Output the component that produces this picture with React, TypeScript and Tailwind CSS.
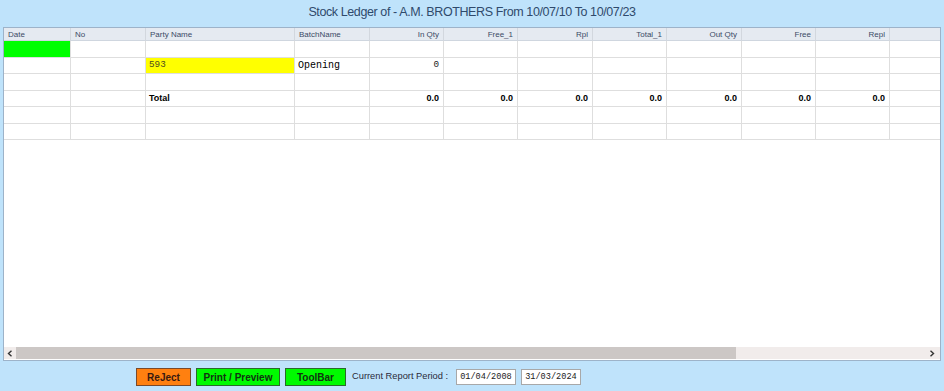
import React from 'react';

const cols = ['Date', 'No', 'Party Name', 'BatchName', 'In Qty', 'Free_1', 'Rpl', 'Total_1', 'Out Qty', 'Free', 'Repl', ''];
const rightCols = [4, 5, 6, 7, 8, 9, 10];

type Cell = { text?: string; kind?: 'mono' | 'mono9' | 'num' | 'bold'; bg?: string };

const rows: Cell[][] = [
	[{ bg: 'bg-[#00ff00]' }],
	[{}, {}, { text: '593', kind: 'mono9', bg: 'bg-[#ffff00]' }, { text: 'Opening', kind: 'mono' }, { text: '0', kind: 'num' }],
	[],
	[
		{},
		{},
		{ text: 'Total', kind: 'bold' },
		{},
		{ text: '0.0', kind: 'bold' },
		{ text: '0.0', kind: 'bold' },
		{ text: '0.0', kind: 'bold' },
		{ text: '0.0', kind: 'bold' },
		{ text: '0.0', kind: 'bold' },
		{ text: '0.0', kind: 'bold' },
		{ text: '0.0', kind: 'bold' },
	],
	[],
	[],
];

const gridCols =
	'grid grid-cols-[67px_75px_149px_75px_74px_74px_75px_74px_75px_74px_74px_1fr]';

function App() {
	return (
		<div
			className="w-[944px] h-[391px] bg-[#bfe3fb] flex flex-col overflow-hidden"
			style={{ fontFamily: '"Liberation Sans", Arial, sans-serif' }}
		>
			<div className="h-[27px] flex items-center justify-center text-[12.5px] tracking-[-0.4px] text-[#2f4a6c] pb-[3px]">
				Stock Ledger of - A.M. BROTHERS From 10/07/10 To 10/07/23
			</div>

			<div className="mx-[3px] h-[334px] bg-white border border-[#9db3c9] flex flex-col">
				<div className={`${gridCols} h-[13px] bg-[#e5eaf1] border-b border-[#cfd6df]`}>
					{cols.map((c, i) => (
						<div
							key={i}
							className={`border-r border-[#d2d7de] last:border-r-0 px-[4px] pt-[1px] text-[8px] leading-[12px] text-[#3b4a66] ${
								rightCols.includes(i) ? 'text-right' : 'text-left'
							}`}
						>
							{c}
						</div>
					))}
				</div>

				{rows.map((r, ri) => (
					<div key={ri} className={`${gridCols} h-[16.5px]`}>
						{cols.map((_, ci) => {
							const cell = r[ci] || {};
							let font = '';
							if (cell.kind === 'mono')
								font = 'font-["Liberation_Mono"] text-[10px] text-black';
							if (cell.kind === 'mono9')
								font = 'font-["Liberation_Mono"] text-[9.3px] text-[#4d4d20]';
							if (cell.kind === 'num')
								font = 'font-["Liberation_Mono"] text-[9.3px] text-[#222]';
							if (cell.kind === 'bold') font = 'font-bold text-[9px] text-black';
							return (
								<div
									key={ci}
									className={`border-r border-b border-[#dedede] last:border-r-0 px-[3px] flex items-center ${
										rightCols.includes(ci) ? 'justify-end pr-[4px]' : 'justify-start'
									} ${cell.bg || ''} ${font}`}
								>
									{cell.text}
								</div>
							);
						})}
					</div>
				))}

				<div className="flex-1" />

				<div className="h-[12px] flex items-center bg-[#f1eceb] mb-[1px]">
					<div className="w-[12px] h-full flex items-center justify-center">
						<svg width="6" height="7" viewBox="0 0 6 7">
							<path d="M4.5 0.8 L1.5 3.5 L4.5 6.2" fill="none" stroke="#333" strokeWidth="1.4" />
						</svg>
					</div>
					<div className="w-[720px] h-full bg-[#ccc7c5]" />
					<div className="flex-1" />
					<div className="w-[12px] h-full flex items-center justify-center mr-[2px]">
						<svg width="6" height="7" viewBox="0 0 6 7">
							<path d="M1.5 0.8 L4.5 3.5 L1.5 6.2" fill="none" stroke="#333" strokeWidth="1.4" />
						</svg>
					</div>
				</div>
			</div>

			<div className="flex items-center pl-[136px] pt-[7px] gap-[5px]">
				<button className="w-[55px] h-[18px] bg-[#ff8010] border border-[#7a4a2a] text-[10px] font-bold text-[#3a1a10] flex items-center justify-center">
					ReJect
				</button>
				<button className="w-[84px] h-[18px] bg-[#00fa00] border border-[#2a6a2a] text-[10px] font-bold text-[#113311] flex items-center justify-center">
					Print / Preview
				</button>
				<button className="w-[61px] h-[18px] bg-[#00fa00] border border-[#2a6a2a] text-[10px] font-bold text-[#113311] flex items-center justify-center">
					ToolBar
				</button>
				<span className="ml-[1px] text-[9.3px] text-[#2a2a3a]">Current Report Period :</span>
				<div className="ml-[3px] w-[60px] h-[16px] bg-white border border-[#a8a8a8] font-['Liberation_Mono'] text-[8.6px] flex items-center pl-[3px] text-[#222]">
					01/04/2008
				</div>
				<div className="w-[60px] h-[16px] bg-white border border-[#a8a8a8] font-['Liberation_Mono'] text-[8.6px] flex items-center pl-[3px] text-[#222]">
					31/03/2024
				</div>
			</div>
		</div>
	);
}

export default App;
